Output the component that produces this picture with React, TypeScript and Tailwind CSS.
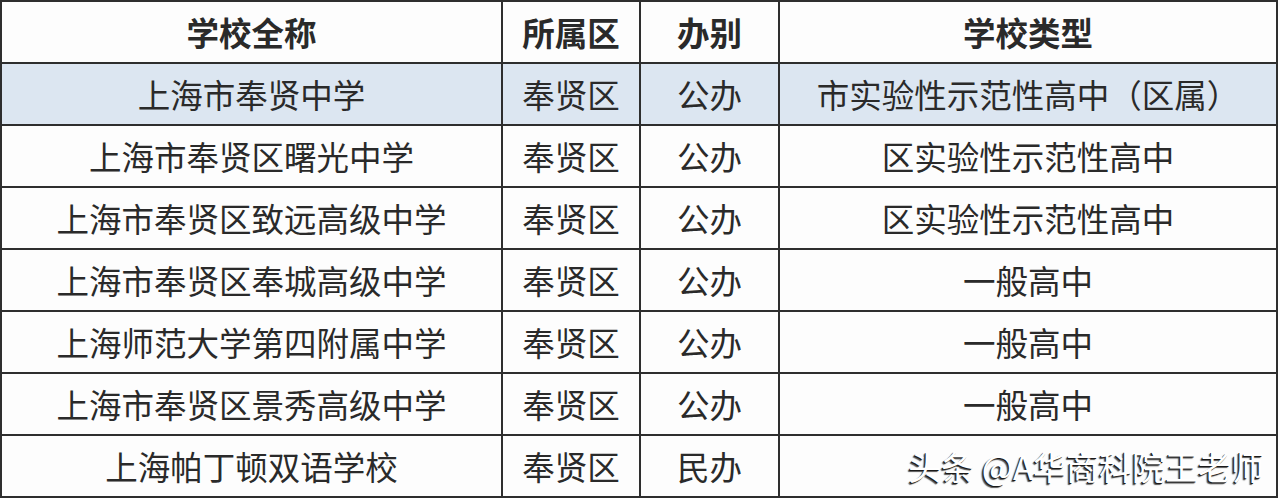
const rows = [
  ["上海市奉贤中学", "奉贤区", "公办", "市实验性示范性高中（区属）"],
  ["上海市奉贤区曙光中学", "奉贤区", "公办", "区实验性示范性高中"],
  ["上海市奉贤区致远高级中学", "奉贤区", "公办", "区实验性示范性高中"],
  ["上海市奉贤区奉城高级中学", "奉贤区", "公办", "一般高中"],
  ["上海师范大学第四附属中学", "奉贤区", "公办", "一般高中"],
  ["上海市奉贤区景秀高级中学", "奉贤区", "公办", "一般高中"],
  ["上海帕丁顿双语学校", "奉贤区", "民办", ""],
];

export default function App() {
  return (
    <div className="w-[1280px] h-[498px] bg-[#fdfdfd] overflow-hidden [font-family:'Noto_Sans_CJK_SC','Noto_Sans',sans-serif]">
      <table className="table-fixed border-collapse w-[1278px] text-[32.5px] text-[#2a2a2a]">
        <colgroup>
          <col className="w-[501px]" />
          <col className="w-[138px]" />
          <col className="w-[139px]" />
          <col />
        </colgroup>
        <thead>
          <tr className="h-[62px]">
            {["学校全称", "所属区", "办别", "学校类型"].map((h) => (
              <th
                key={h}
                className="border-2 border-[#2e2e2e] text-center font-bold p-0 leading-none"
              >
                {h}
              </th>
            ))}
          </tr>
        </thead>
        <tbody>
          {rows.map((r, i) => (
            <tr
              key={i}
              className={`h-[62px] ${i === 0 ? "bg-[#dce6f1]" : ""}`}
            >
              {r.map((c, j) => (
                <td
                  key={j}
                  className="border-2 border-[#2e2e2e] text-center p-0 leading-none"
                >
                  {i === rows.length - 1 && j === 3 ? (
                    <div className="text-right pr-[12px] text-[33px] text-white [text-shadow:-1px_1px_0_#1a1a1a,-2px_2px_1px_#555]">
                      头条 @A华商科院王老师
                    </div>
                  ) : (
                    c
                  )}
                </td>
              ))}
            </tr>
          ))}
        </tbody>
      </table>
    </div>
  );
}
